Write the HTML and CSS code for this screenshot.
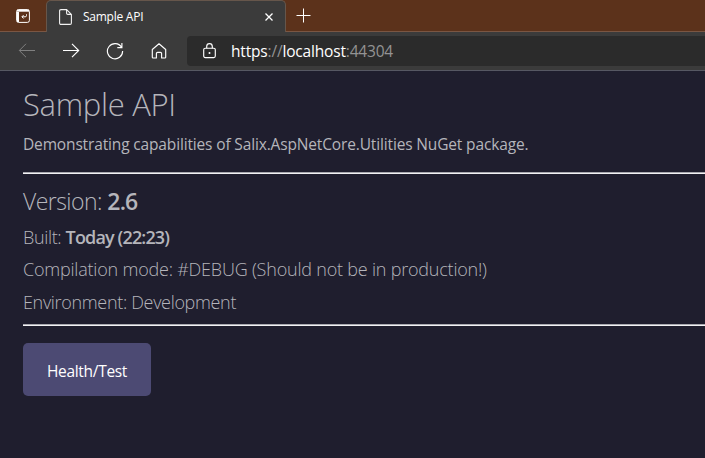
FILE: index.html
```html
<!DOCTYPE html>
<html lang="en">
<head>
<meta charset="utf-8">
<title>Sample API</title>
<link rel="stylesheet" href="styles.css">
</head>
<body>
<header class="browser">
  <div class="tabstrip">
    <div class="tab-actions">
      <svg width="14" height="14" viewBox="0 0 14 14" fill="none" stroke="#fff"><rect x=".6" y=".6" width="12.8" height="12.8" rx="2"/><path d="M1 1.700h12" stroke-width="2"/><path d="M2 3v10" stroke-width="2"/><path d="M10.500 5.300v1.200q0 1.300-1.300 1.300H6M7.600 6.100 5.900 7.800l1.700 1.700" stroke-width="1"/></svg>
    </div>
    <div class="tab">
      <svg width="13" height="16" viewBox="0 0 13 16" fill="none" stroke="#f2f2f2" stroke-width="1.1"><path d="M2 .6h5.600L12.400 5.400v8.600q0 1.400-1.400 1.400H2Q.6 15.400.6 14V2Q.6.6 2 .6zM7.600.6v3.600q0 1.200 1.200 1.200h3.600"/></svg>
      <span class="tab-title">Sample API</span>
      <svg class="close" width="8" height="8" viewBox="0 0 8 8" stroke="#fff" stroke-width="1.3"><path d="m.5.5 7 7m0-7-7 7"/></svg>
    </div>
    <svg class="new-tab" width="15" height="15" viewBox="0 0 15 15" stroke="#fff"><path d="M7.500.5v14M.5 7.500h14"/></svg>
  </div>
  <div class="toolbar">
    <svg class="back" width="18" height="16" viewBox="0 0 18 16" fill="none" stroke="#808080"><path d="M17 7.500H1.500M8 .8 1.300 7.500 8 14.200"/></svg>
    <svg class="forward" width="18" height="16" viewBox="0 0 18 16" fill="none" stroke="#fff" stroke-width="1.150"><path d="M1 7.500h15.500M10 .8 16.700 7.500 10 14.200"/></svg>
    <svg class="reload" width="18" height="18" viewBox="0 0 18 18" fill="none" stroke="#fff" stroke-width="1.150"><path d="M15.500 5.300A7.600 7.600 0 1 0 16.600 9M15.900 1v4.600h-4.600"/></svg>
    <svg class="home" width="16" height="17" viewBox="0 0 16 17" fill="none" stroke="#fff" stroke-width="1.150" stroke-linejoin="round"><path d="M1.300 6.500 8 .8l6.700 5.700v7.700q0 .8-.8.8h-3.300v-4.500q0-1.200-1.200-1.200H6.600q-1.200 0-1.200 1.200V15H2.100q-.8 0-.8-.8z"/></svg>
    <div class="address">
      <svg width="13" height="16" viewBox="0 0 13 16" fill="none" stroke="#fff" stroke-width="1.150"><rect x=".7" y="5.200" width="11.600" height="9.400" rx="1.500"/><path d="M3.700 5.200V3.400a2.800 2.800 0 0 1 5.600 0v1.800"/><circle cx="6.500" cy="9.900" r="1" fill="#fff" stroke="none"/></svg>
      <span class="url"><span class="bright">https</span>://<span class="bright">localhost</span>:44304</span>
    </div>
  </div>
</header>
<main class="page">
  <h1>Sample API</h1>
  <p class="lead">Demonstrating capabilities of Salix.AspNetCore.Utilities NuGet package.</p>
  <hr>
  <p class="version">Version: <strong>2.6</strong></p>
  <p class="info built">Built: <strong>Today (22:23)</strong></p>
  <p class="info mode">Compilation mode: #DEBUG (Should not be in production!)</p>
  <p class="info env">Environment: Development</p>
  <hr>
  <a class="button">Health/Test</a>
</main>
</body>
</html>
```
FILE: styles.css
```css
* { box-sizing: border-box; }
body { margin: 0; width: 705px; height: 458px; overflow: hidden; background: #1f1e2e; font-family: "Open Sans", "Noto Sans", sans-serif; }
svg { display: block; flex: none; }
.tabstrip { display: flex; height: 32px; background: #5c321b; box-shadow: inset 0 -1px #7a5643; }
.tab-actions { width: 46px; padding: 9px 0 0 16px; }
.tab { width: 240px; height: 32px; background: #3b3b3b; border: 1px solid #66564b; border-bottom: 0; border-radius: 5px 5px 0 0; display: flex; align-items: center; padding: 0 12px; }
.tab-title { flex: 1; margin-left: 11px; font-size: 12px; line-height: 16px; color: #fff; letter-spacing: -.25px; }
.new-tab { margin: 8px 0 0 10px; }
.toolbar { display: flex; align-items: center; height: 39px; background: #3b3b3b; border-bottom: 1px solid #565863; padding-left: 18px; }
.forward { margin-left: 26px; }
.reload { margin-left: 26px; }
.home { margin-left: 27px; }
.address { flex: 1; margin-left: 20px; height: 30px; background: #2b2b2b; border-radius: 4px 0 0 4px; display: flex; align-items: center; padding-left: 16px; }
.url { margin-left: 15px; color: #939393; font-size: 15.500px; letter-spacing: -.18px; white-space: nowrap; }
.bright { color: #fff; }
.page { padding-left: 23px; color: #b5b5bb; }
h1, p { margin: 0; white-space: nowrap; }
h1 { font-size: 31px; font-weight: 300; line-height: 42px; padding-top: 12px; letter-spacing: -.3px; }
.lead { font-size: 15.500px; line-height: 22px; padding-top: 8px; letter-spacing: -.15px; }
hr { border: 0; height: 2px; margin: 17px 0 0; background: #f2f2f4; border-top: 1px solid #a9a9b0; }
.version { font-size: 23px; font-weight: 300; line-height: 32px; padding-top: 11px; height: 51px; letter-spacing: -.55px; }
.info { font-size: 18px; font-weight: 300; line-height: 24px; height: 32px; }
.built { letter-spacing: -.35px; }
.mode { letter-spacing: -.21px; height: 33px; }
.env { letter-spacing: -.33px; }
strong { font-weight: 600; letter-spacing: -.85px; }
.env + hr { margin-top: 2px; }
.button { display: flex; align-items: center; justify-content: center; width: 128px; height: 53px; margin-top: 17px; padding-top: 2px; background: #4c4a73; border-radius: 5px; color: #fff; font-size: 15.500px; letter-spacing: -.3px; }
```
